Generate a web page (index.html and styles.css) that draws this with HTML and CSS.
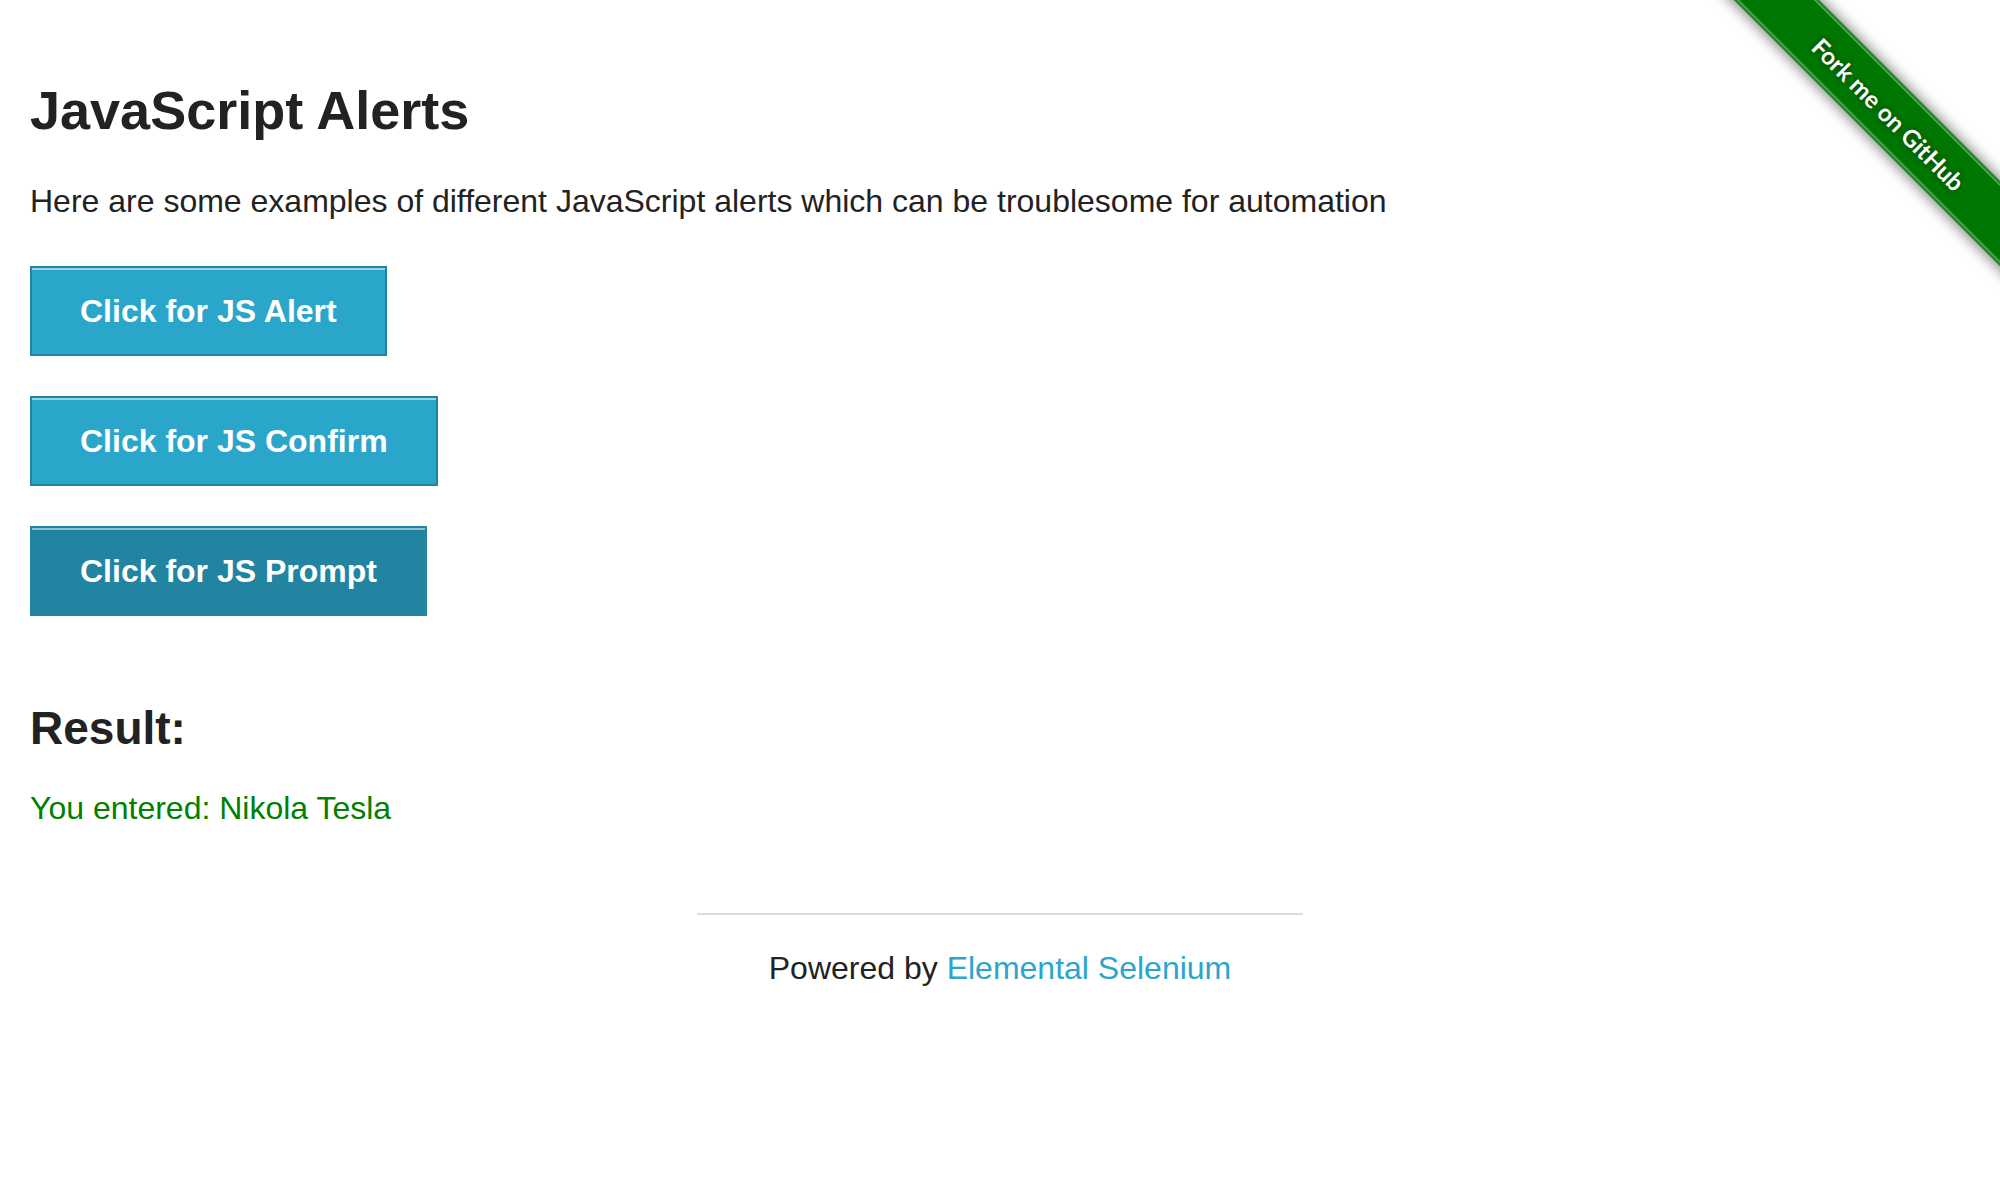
FILE: index.html
```
<!DOCTYPE html>
<html lang="en">
<head>
<meta charset="utf-8">
<title>The Internet</title>
<link rel="stylesheet" href="styles.css">
</head>
<body>
<a class="ribbon" href="#" aria-label="Fork me on GitHub">
<svg class="ribbon-art" viewBox="0 0 298 298">
<defs><filter id="shade" x="-20%" y="-20%" width="140%" height="140%"><feGaussianBlur stdDeviation="7"/></filter></defs>
<path class="ribbon-shadow" filter="url(#shade)" d="M-2-30 330 302V210L90-30Z"/>
<path class="ribbon-band" d="M30-2 300 268V183L115-2Z"/>
<path class="ribbon-edge" d="M33-2 300 265M112-2 300 186"/>
<path class="ribbon-stitch" d="M34-2 300 264M111-2 300 187"/>
<text class="ribbon-text" transform="translate(180 121) rotate(45)">Fork me on GitHub</text>
</svg>
</a>
<main class="content">
<h3 class="title">JavaScript Alerts</h3>
<p class="intro">Here are some examples of different JavaScript alerts which can be troublesome for automation</p>
<ul class="actions">
<li><button class="button" type="button">Click for JS Alert</button></li>
<li><button class="button" type="button">Click for JS Confirm</button></li>
<li><button class="button button-active" type="button">Click for JS Prompt</button></li>
</ul>
<h4 class="result-title">Result:</h4>
<p class="result">You entered: Nikola Tesla</p>
</main>
<footer class="footer">
<hr class="rule">
<p class="powered">Powered by <a class="link" href="#">Elemental Selenium</a></p>
</footer>
</body>
</html>
```
FILE: styles.css
```
* { box-sizing: border-box; }
body {
  margin: 0;
  position: relative;
  background: #fff;
  color: #222;
  font: 32px/52px "Liberation Sans", Arial, sans-serif;
}
.ribbon { position: absolute; top: 0; right: 0; width: 298px; height: 298px; }
.ribbon-art { display: block; width: 100%; height: 100%; }
.ribbon-shadow { fill: #000; opacity: .45; }
.ribbon-band { fill: #070; }
.ribbon-edge { fill: none; stroke: #2a8b2a; stroke-width: 4; }
.ribbon-stitch { fill: none; stroke: #6fb36f; stroke-width: 1; }
.ribbon-text {
  fill: #fff;
  font: 700 24px Lato, "Open Sans", sans-serif;
  text-anchor: middle;
  text-shadow: 0 0 6px rgba(0, 0, 0, .5);
}
.content { padding: 72px 30px 0; }
.title { margin: 0 0 27px; font-size: 54px; line-height: 76px; }
.intro { margin: 0 0 39px; }
.actions { display: flex; flex-direction: column; gap: 40px; margin: 0; padding: 0; list-style: none; }
.actions li { display: flex; }
.button {
  height: 90px;
  padding: 0 48px;
  border: 2px solid #2284a1;
  background: #2ba6cb;
  box-shadow: inset 0 2px 0 rgba(255, 255, 255, .5);
  color: #fff;
  font: 700 32px/32px "Liberation Sans", Arial, sans-serif;
}
.button-active { background: #2284a1; }
.result-title { margin: 80px 0 22px; font-size: 46px; line-height: 64px; }
.result { margin: 0; color: #008000; }
.footer { display: flex; flex-direction: column; align-items: center; padding-top: 79px; }
.rule { width: 606px; max-width: 100%; margin: 0 0 27px; border: 0; border-top: 2px solid #ddd; }
.powered { margin: 0; }
.link { color: #2ba6cb; text-decoration: none; }
```
